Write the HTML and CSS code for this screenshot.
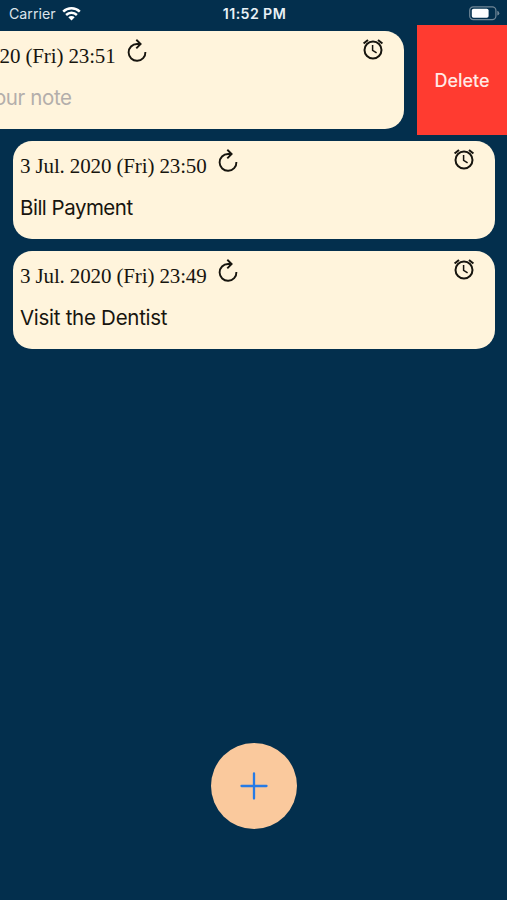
FILE: index.html
```html
<!DOCTYPE html>
<html lang="en">
<head>
<meta charset="utf-8">
<meta name="viewport" content="width=device-width, initial-scale=1">
<title>Notes</title>
<link rel="stylesheet" href="styles.css">
</head>
<body>
<svg class="defs" width="0" height="0" aria-hidden="true">
  <symbol id="repeat" viewBox="0 0 24 26">
    <path d="M15.5 6H12A8.4 8.4 0 1 0 20.4 14M11.3 1.8l4.3 4.2-4.3 4.3" fill="none" stroke="currentColor" stroke-width="1.9"/>
  </symbol>
  <symbol id="alarm" viewBox="0 0 24 24">
    <circle cx="12" cy="13" r="8.5" fill="none" stroke="currentColor" stroke-width="2"/>
    <path d="M11.6 8v5.3l4 2.6" fill="none" stroke="currentColor" stroke-width="1.5"/>
    <path d="M2.6 6.5l4.4-3.6M21.4 6.5L17 2.9" stroke="currentColor" stroke-width="2"/>
  </symbol>
</svg>
<div class="screen">
  <header class="status">
    <div class="carrier"><span class="carrier-name">Carrier</span>
      <svg class="wifi" width="19" height="15" viewBox="0 0 19 15"><g fill="none" stroke="currentColor" stroke-width="2.5"><path d="M1.2 5.6a12 12 0 0 1 16.6 0"/><path d="M4.1 9a7.8 7.8 0 0 1 10.8 0"/></g><path d="M6.3 11.2a4.6 4.6 0 0 1 6.4 0L9.5 14.4z" fill="currentColor"/></svg>
    </div>
    <span class="clock">11:52 PM</span>
    <svg class="battery" width="31" height="15" viewBox="0 0 31 15"><rect x=".7" y=".8" width="26.2" height="12.8" rx="3.6" fill="none" stroke="#718797" stroke-width="1.2"/><rect x="2.8" y="2.7" width="16.8" height="9" rx="1.8" fill="#fff"/><path d="M28.3 4.8v4.8q2-.8 2-2.4t-2-2.4" fill="#718797"/></svg>
  </header>
  <main class="list">
    <div class="row row-swiped">
      <article class="card">
        <div class="top"><time class="date">3 Jul. 2020 (Fri) 23:51</time><svg class="repeat"><use href="#repeat"/></svg><svg class="alarm"><use href="#alarm"/></svg></div>
        <p class="note placeholder">Enter your note</p>
      </article>
      <button class="delete">Delete</button>
    </div>
    <div class="row">
      <article class="card">
        <div class="top"><time class="date">3 Jul. 2020 (Fri) 23:50</time><svg class="repeat"><use href="#repeat"/></svg><svg class="alarm"><use href="#alarm"/></svg></div>
        <p class="note bill">Bill Payment</p>
      </article>
    </div>
    <div class="row">
      <article class="card">
        <div class="top"><time class="date">3 Jul. 2020 (Fri) 23:49</time><svg class="repeat"><use href="#repeat"/></svg><svg class="alarm"><use href="#alarm"/></svg></div>
        <p class="note">Visit the Dentist</p>
      </article>
    </div>
  </main>
  <footer class="actions">
    <button class="add" aria-label="Add note"><svg width="28" height="28" viewBox="0 0 28 28"><path d="M14 1.5v25M1.5 14h25" stroke="#267be6" stroke-width="2.3" stroke-linecap="round"/></svg></button>
  </footer>
</div>
</body>
</html>
```
FILE: styles.css
```css
* { box-sizing: border-box; }
body { margin: 0; background: #032f4d; font-family: Inter, "Liberation Sans", sans-serif; }
.defs { display: block; }
.screen { height: 900px; display: flex; flex-direction: column; overflow: hidden; }
.status { height: 25px; flex: none; display: grid; grid-template-columns: 1fr auto 1fr; align-items: center; padding: 2px 7px 0 9px; color: #fff; font-size: 14.2px; line-height: 22px; }
.carrier { display: flex; align-items: center; gap: 6px; color: #dce4ea; }
.wifi { color: #fff; }
.clock { font-weight: 600; font-size: 14.2px; color: #e9f1f6; letter-spacing: .4px; }
.battery { justify-self: end; }
.list { flex: 1; }
.row { height: 110px; display: flex; align-items: center; padding: 0 12px 0 13px; }
.row-swiped { margin-left: -91px; padding-right: 0; }
.card { flex: 1; height: 98px; padding: 0 7px; border-radius: 19px; background: #fff4dc; color: #17150f; }
.row-swiped .card { flex: none; width: 482px; margin-right: 13px; }
.top { display: flex; height: 48px; }
.date { width: 187px; font: 21px/50px "Liberation Serif", serif; letter-spacing: -.13px; white-space: nowrap; }
.repeat { width: 24px; height: 26px; margin: 7px 0 0 9px; }
.alarm { width: 24px; height: 24px; margin: 6px 12px 0 auto; }
.note { margin: 4px 0 0; font-size: 20.5px; line-height: 30px; letter-spacing: -.28px; white-space: nowrap; }
.bill { letter-spacing: -.5px; }
.placeholder { color: #b3aeab; letter-spacing: -.37px; }
.delete { flex: 1; height: 110px; padding: 0; border: 0; background: #ff3b30; color: #ffe9e5; font: 500 18px Inter, sans-serif; }
.actions { flex: none; display: flex; justify-content: center; padding-bottom: 71px; }
.add { width: 86px; height: 86px; padding: 0; border: 0; border-radius: 50%; background: #fac99d; display: grid; place-items: center; }
```
